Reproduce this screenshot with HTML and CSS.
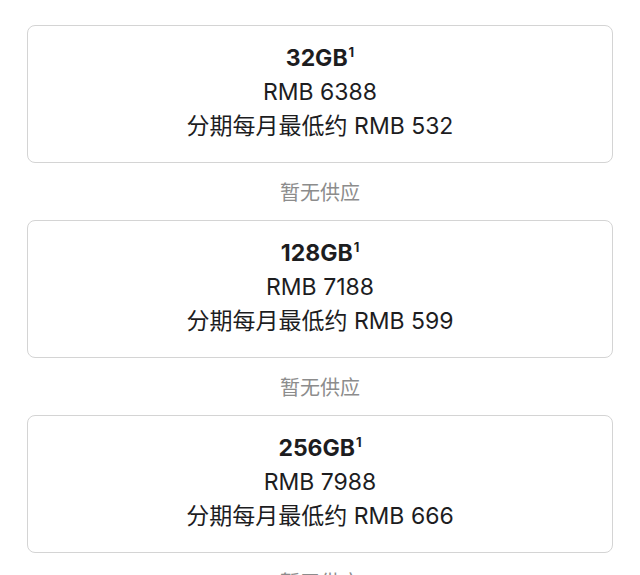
FILE: index.html
```html
<!DOCTYPE html>
<html lang="zh-CN">
<head>
<meta charset="utf-8">
<link rel="stylesheet" href="styles.css">
</head>
<body>
<div class="list">
  <div class="option">
    <div class="card">
      <div class="cap">32GB<sup class="fn">1</sup></div>
      <div class="line">RMB 6388</div>
      <div class="line">分期每月最低约 RMB 532</div>
    </div>
    <div class="status">暂无供应</div>
  </div>
  <div class="option">
    <div class="card">
      <div class="cap">128GB<sup class="fn">1</sup></div>
      <div class="line">RMB 7188</div>
      <div class="line">分期每月最低约 RMB 599</div>
    </div>
    <div class="status">暂无供应</div>
  </div>
  <div class="option">
    <div class="card">
      <div class="cap">256GB<sup class="fn">1</sup></div>
      <div class="line">RMB 7988</div>
      <div class="line">分期每月最低约 RMB 666</div>
    </div>
    <div class="status">暂无供应</div>
  </div>
</div>
</body>
</html>
```
FILE: styles.css
```css
html, body {
  margin: 0;
  padding: 0;
  background: #ffffff;
}
body {
  font-family: Inter, "Noto Sans CJK SC", sans-serif;
  color: #1d1d1f;
  height: 575px;
  overflow: hidden;
}
.list {
  padding: 25px 0 0 27px;
  width: 586px;
  display: flex;
  flex-direction: column;
}
.option {
  display: flex;
  flex-direction: column;
}
.card {
  height: 138px;
  box-sizing: border-box;
  border: 1.5px solid #d4d4d4;
  border-radius: 8px;
  display: flex;
  flex-direction: column;
  align-items: center;
  justify-content: center;
  padding-bottom: 3px;
}
.cap {
  font-size: 23px;
  font-weight: 700;
  line-height: 33px;
}
.fn {
  font-size: 13px;
  line-height: 0;
  vertical-align: 0;
  position: relative;
  top: -9px;
  margin-left: 1px;
}
.line {
  font-size: 23px;
  line-height: 34px;
}
.status {
  height: 57px;
  display: flex;
  align-items: center;
  justify-content: center;
  font-size: 20px;
  color: #8c8c8c;
  font-family: "Noto Sans CJK SC", sans-serif;
}
```
